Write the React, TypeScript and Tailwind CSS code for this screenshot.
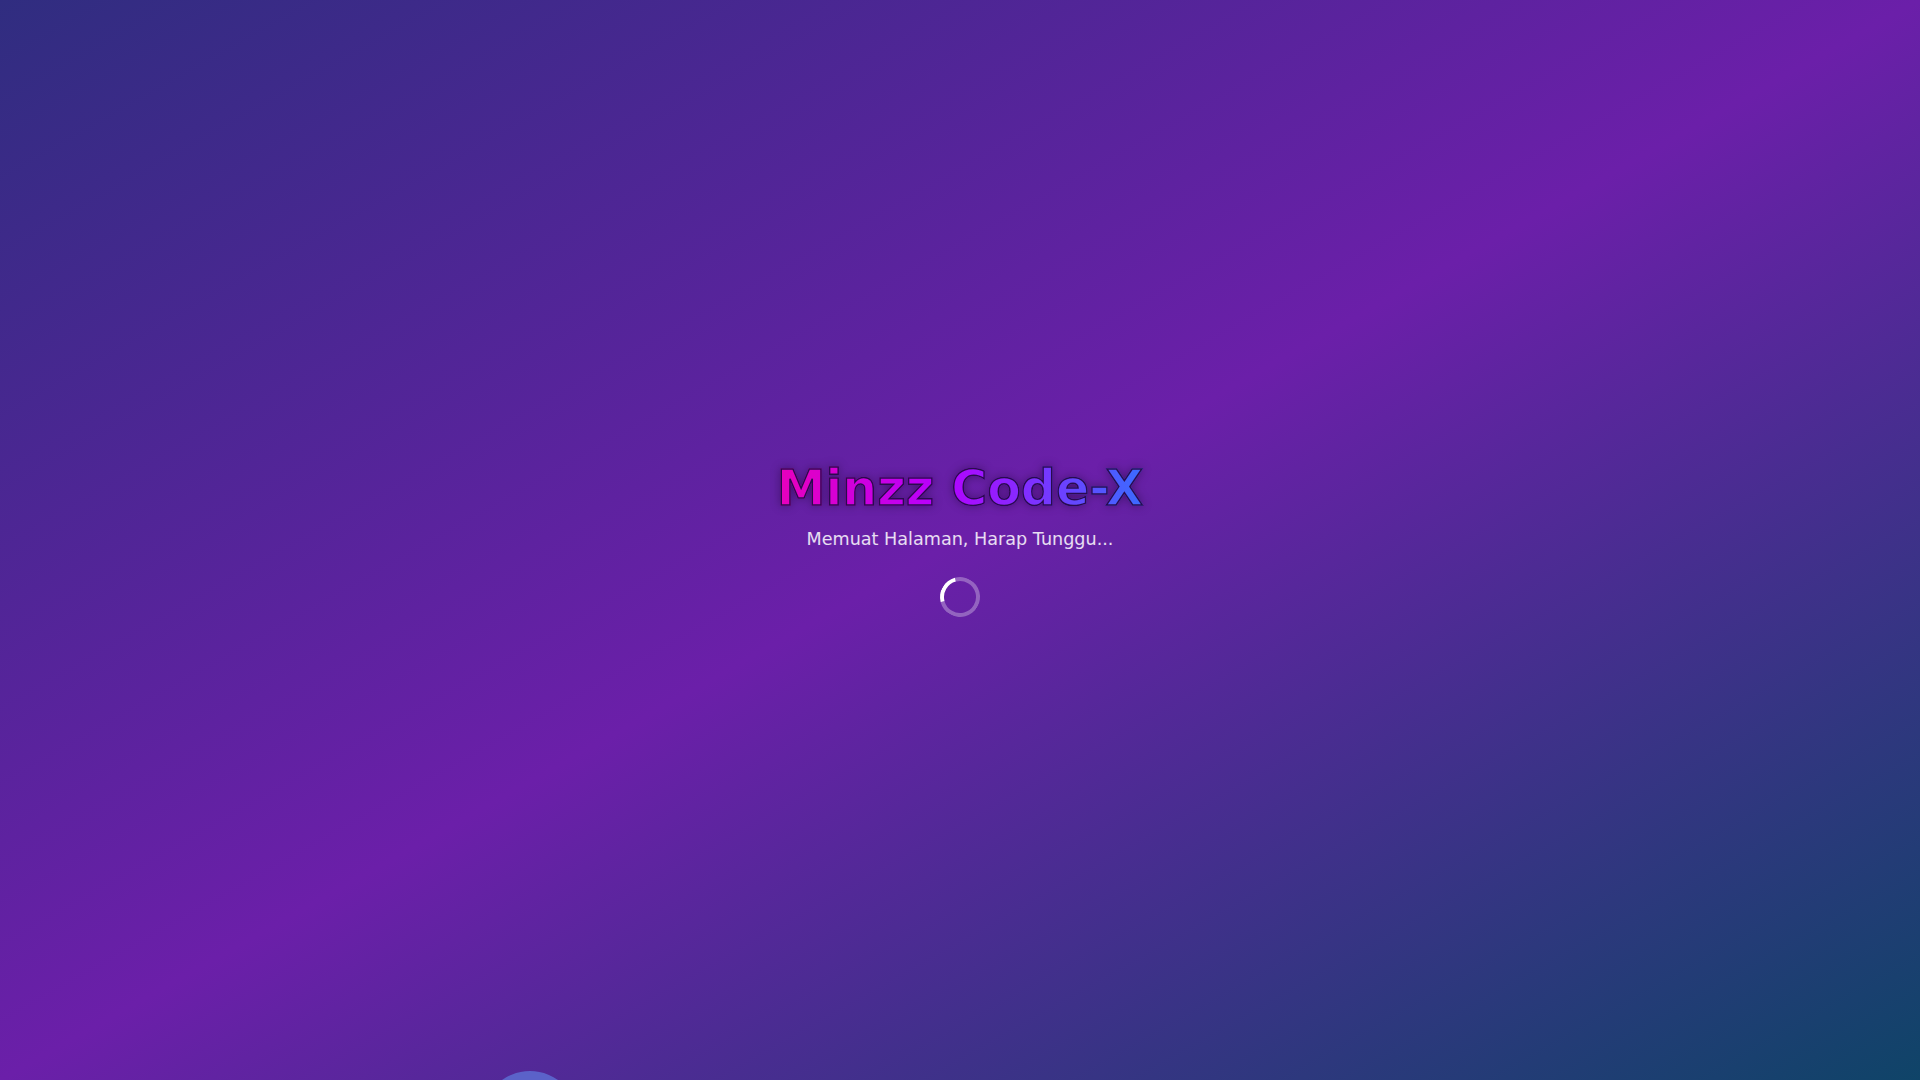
export default function App() {
  return (
    <div className="relative min-h-screen w-full overflow-hidden bg-[linear-gradient(to_bottom_right,#302d80_0%,#6b1fa9_50%,#0f4468_100%)] font-['DejaVu_Sans',sans-serif]">
      <div className="flex min-h-screen flex-col items-center justify-center">
        <h1 className="bg-[linear-gradient(90deg,#e800bc_0%,#b600ff_45%,#3a6cff_100%)] bg-clip-text text-[49px] font-bold leading-none text-transparent [-webkit-text-stroke:1.5px_#2a0b4f] drop-shadow-[0_0_5px_rgba(20,0,40,0.4)]">
          Minzz Code-X
        </h1>
        <p className="mt-3 text-[17.6px] leading-7 text-white/85">Memuat Halaman, Harap Tunggu...</p>
        <div className="mt-6 h-10 w-10 -rotate-[60deg] rounded-full border-4 border-white/30 border-t-white" />
      </div>
      <div className="absolute left-[482px] top-[1071px] h-24 w-24 rounded-full bg-[#5b62c9]" />
    </div>
  );
}
